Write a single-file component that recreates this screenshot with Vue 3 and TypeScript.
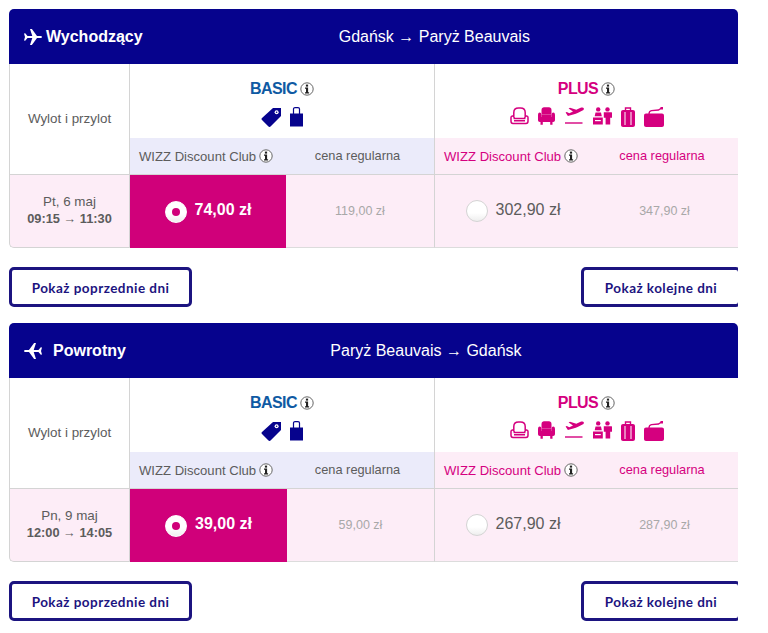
<template>
  <div class="page">
    <section v-for="f in flights" :key="f.title" class="flight">
      <header class="bar">
        <svg class="plane" :class="{ back: f.back }" viewBox="0 0 18 16">
          <path d="M0 4.500l1.200-.2 2.300 2.700h4.800L6 0h1.900l5.100 7h3.200c1 0 1.800.4 1.800 1s-.8 1-1.800 1H13l-5.100 7H6l2.300-7H3.500l-2.300 2.700L0 11.500l1-3.500z" />
        </svg>
        <h2 class="title">{{ f.title }}</h2>
        <div class="route">{{ f.route }}</div>
      </header>

      <div class="table">
        <div class="label-cell"><span>Wylot i przylot</span></div>

        <div class="plan basic">
          <div class="plan-head">
            <div class="plan-name">BASIC <svg class="info" viewBox="0 0 14 14"><circle cx="7" cy="7" r="6.2" fill="#fff" stroke="#666" /><rect x="5.9" y="2.6" width="2.2" height="2" fill="#222" /><path d="M5 5.6h3.1v4.6h1v1.2H5v-1.2h1V6.800H5z" fill="#222" /></svg></div>
            <div class="icons">
              <svg width="21" height="20" viewBox="0 0 21 20"><path d="M12 1h8v8L9.500 19.500a1.400 1.400 0 0 1-2 0L1 13a1.400 1.400 0 0 1 0-2z" /><circle cx="15.600" cy="5.200" r="2" fill="#fff" /><circle cx="15.600" cy="5.200" r=".8" /></svg>
              <svg width="13" height="20" viewBox="0 0 13 20"><path d="M0 6.500h13V19.500H0z" /><path d="M3.500 7V2C3.500 1 4.200.7 5 .7h3c.8 0 1.500.3 1.500 1.300v5" fill="none" stroke="#06038d" stroke-width="1.200" /></svg>
            </div>
          </div>
          <div class="sub">
            <div class="sub-club">WIZZ Discount Club <svg class="info" viewBox="0 0 14 14"><circle cx="7" cy="7" r="6.2" fill="#fff" stroke="#666" /><rect x="5.9" y="2.6" width="2.2" height="2" fill="#222" /><path d="M5 5.6h3.1v4.6h1v1.2H5v-1.2h1V6.800H5z" fill="#222" /></svg></div>
            <div class="sub-reg">cena regularna</div>
          </div>
        </div>

        <div class="plan plus">
          <div class="plan-head">
            <div class="plan-name">PLUS <svg class="info" viewBox="0 0 14 14"><circle cx="7" cy="7" r="6.2" fill="#fff" stroke="#666" /><rect x="5.9" y="2.6" width="2.2" height="2" fill="#222" /><path d="M5 5.6h3.1v4.6h1v1.2H5v-1.2h1V6.800H5z" fill="#222" /></svg></div>
            <div class="icons">
              <svg width="19" height="18" viewBox="0 0 19 18"><path d="M3.800 9V5.500C3.800 2.800 5.800 1 8.500 1h2c2.700 0 4.700 1.800 4.700 4.500V9" fill="none" stroke="#d5007f" stroke-width="1.500" /><path d="M1 10.500C1 8.700 3.500 8.300 4 10l.3 1.500h10.400L15 10c.5-1.700 3-1.300 3 .5v3.800c0 1.200-.9 2.200-2 2.200H3c-1.100 0-2-1-2-2.200zM4 13.800h11" fill="none" stroke="#d5007f" stroke-width="1.500" /></svg>
              <svg width="17" height="18" viewBox="0 0 17 18"><path d="M3.500 3C3.500 1.300 4.700.3 6 .3h5c1.300 0 2.500 1 2.500 2.700v4.500h-10z" /><path d="M0 8c0-1.700.8-2.500 1.700-2.500S3.400 6.300 3.400 8v2h10.200V8c0-1.700.8-2.500 1.700-2.500S17 6.300 17 8v5c0 1.100-.8 2-1.800 2H1.800C.8 15 0 14.100 0 13zM2.500 15h2.300v2.700H2.500zM12.200 15h2.300v2.700h-2.300z" /><path d="M3.400 7.500h10.200v3H3.400z" /></svg>
              <svg width="20" height="18" viewBox="0 0 20 18"><path d="M19.800 1.200c-.5-1-2-.9-3.200-.4l-4.300 1.900L6 .8 4.600 1.500l4.400 3.100-3.700 1.700-2.500-1.300-1.200.6 2.300 3.300c3.400-.4 7.500-1.900 10.200-3.100l4.900-2.500c.7-.4 1-1.400.8-2.100z" /><path d="M1 15.300h17.500v1.400H1z" /></svg>
              <svg width="19" height="18" viewBox="0 0 19 18"><circle cx="5.200" cy="2.400" r="2.200" /><circle cx="14.500" cy="2.400" r="2.200" /><path d="M2.500 5.500h5.500l.8 3.700H1.700zM0 10.400h9.800v7.100H0zM10.800 5.300h7.700c.3 0 .5.200.5.500v5h-1.800v6.700h-4.600v-6.700h-1.800z" /><path d="M2 13h5.800v1.200H2z" fill="#fff" /></svg>
              <svg width="14" height="21" viewBox="0 0 14 21"><path d="M4.500 3.500V1h5v2.500" fill="none" stroke="#d5007f" stroke-width="1.400" /><path d="M2 3h10c1.100 0 2 .9 2 2v13c0 1.100-.9 2-2 2H2c-1.100 0-2-.9-2-2V5c0-1.100.9-2 2-2z" /><path d="M3.500 5h1v13h-1zM9.500 5h1v13h-1z" fill="#fff" /></svg>
              <svg width="20" height="20" viewBox="0 0 20 20"><path d="M2 6.500h16c1.100 0 2 .9 2 2V18c0 1.100-.9 2-2 2H2c-1.100 0-2-.9-2-2V8.500c0-1.100.9-2 2-2z" /><path d="M5 7c0-2 1-3 2.500-3.300L14.500 3l3-2" fill="none" stroke="#d5007f" stroke-width="1.300" /><path d="M16.500 0h2.500v2.500h-2.500z" /></svg>
            </div>
          </div>
          <div class="sub">
            <div class="sub-club">WIZZ Discount Club <svg class="info" viewBox="0 0 14 14"><circle cx="7" cy="7" r="6.2" fill="#fff" stroke="#666" /><rect x="5.9" y="2.6" width="2.2" height="2" fill="#222" /><path d="M5 5.6h3.1v4.6h1v1.2H5v-1.2h1V6.800H5z" fill="#222" /></svg></div>
            <div class="sub-reg">cena regularna</div>
          </div>
        </div>

        <div class="date-cell">
          <div>{{ f.date }}</div>
          <div class="times">{{ f.times }}</div>
        </div>

        <div class="fares first">
          <div class="fare selected" :style="{ width: f.selectedWidth + 'px' }">
            <span class="radio on"></span>
            <span class="price">{{ f.basic }}</span>
          </div>
          <div class="regular">{{ f.basicRegular }}</div>
        </div>

        <div class="fares">
          <div class="fare">
            <span class="radio"></span>
            <span class="price">{{ f.plus }}</span>
          </div>
          <div class="regular">{{ f.plusRegular }}</div>
        </div>
      </div>

      <div class="actions">
        <button class="btn prev">Pokaż poprzednie dni</button>
        <button class="btn next">Pokaż kolejne dni</button>
      </div>
    </section>
  </div>
</template>

<script setup lang="ts">
interface Flight {
  title: string
  route: string
  back: boolean
  date: string
  times: string
  basic: string
  basicRegular: string
  plus: string
  plusRegular: string
  selectedWidth: number
}

const flights: Flight[] = [
  {
    title: 'Wychodzący',
    route: 'Gdańsk → Paryż Beauvais',
    back: false,
    date: 'Pt, 6 maj',
    times: '09:15 → 11:30',
    basic: '74,00 zł',
    basicRegular: '119,00 zł',
    plus: '302,90 zł',
    plusRegular: '347,90 zł',
    selectedWidth: 156
  },
  {
    title: 'Powrotny',
    route: 'Paryż Beauvais → Gdańsk',
    back: true,
    date: 'Pn, 9 maj',
    times: '12:00 → 14:05',
    basic: '39,00 zł',
    basicRegular: '59,00 zł',
    plus: '267,90 zł',
    plusRegular: '287,90 zł',
    selectedWidth: 157
  }
]
</script>

<style>
html,
body {
  margin: 0;
  background: #fff;
}
</style>

<style scoped>
.page {
  width: 729px;
  padding: 9px 0 0 9px;
  overflow: hidden;
  font-family: "Liberation Sans", Arial, sans-serif;
  color: #5c5c5c;
}
.flight {
  margin-bottom: 16px;
}
.bar {
  height: 55px;
  display: flex;
  align-items: center;
  padding: 0 12px 0 15px;
  background: #06038d;
  border-radius: 5px 5px 0 0;
  color: #fff;
}
.plane {
  width: 18px;
  height: 16px;
  margin-right: 4px;
  fill: #fff;
  flex: none;
}
.plane.back {
  transform: scaleX(-1);
  margin-right: 11px;
}
.title {
  margin: 0;
  font-size: 16px;
  font-weight: 700;
  white-space: nowrap;
}
.route {
  flex: 1;
  text-align: center;
  font-size: 16px;
}
.table {
  display: grid;
  grid-template-columns: 120px 305px 304px;
  grid-template-rows: 111px 73px;
}
.label-cell {
  display: flex;
  align-items: center;
  justify-content: center;
  padding-bottom: 2px;
  border-left: 1px solid #d4d4d4;
  border-bottom: 1px solid #d4d4d4;
  font-size: 13.400px;
}
.plan {
  display: flex;
  flex-direction: column;
  border-left: 1px solid #d4d4d4;
  border-bottom: 1px solid #d4d4d4;
}
.plan-head {
  height: 74px;
  padding-top: 15px;
  box-sizing: border-box;
  text-align: center;
}
.plan-name {
  height: 20px;
  display: flex;
  align-items: center;
  justify-content: center;
  gap: 3px;
  font-size: 16px;
  font-weight: 700;
  letter-spacing: -0.6px;
}
.basic .plan-name {
  color: #0f5aa3;
}
.plus .plan-name {
  color: #d5007f;
}
.icons {
  display: flex;
  align-items: flex-start;
  justify-content: center;
  gap: 8px;
  height: 20px;
  margin-top: 8px;
}
.basic .icons svg {
  fill: #06038d;
}
.plus .icons {
  gap: 9px;
}
.plus .icons svg {
  fill: #d5007f;
}
.info {
  width: 14px;
  height: 14px;
  flex: none;
}
.sub {
  flex: 1;
  display: flex;
  align-items: center;
  font-size: 13.100px;
}
.basic .sub {
  background: #ebebfa;
  color: #5c5c5c;
}
.plus .sub {
  background: #fdedf7;
  color: #d5007f;
}
.sub-club {
  width: 156px;
  box-sizing: border-box;
  padding-left: 9px;
  display: flex;
  align-items: center;
  gap: 3px;
  white-space: nowrap;
}
.sub-reg {
  flex: 1;
  text-align: center;
  margin-top: -1px;
  padding-right: 5px;
  font-size: 12.800px;
}
.date-cell {
  display: flex;
  flex-direction: column;
  align-items: center;
  justify-content: center;
  gap: 1px;
  padding-bottom: 1px;
  background: #fdedf7;
  border-left: 1px solid #d4d4d4;
  border-bottom: 1px solid #d4d4d4;
  border-radius: 0 0 0 5px;
  font-size: 13.400px;
  line-height: 16px;
}
.times {
  font-weight: 700;
  font-size: 12.800px;
}
.fares {
  display: flex;
  background: #fdedf7;
  border-left: 1px solid #d4d4d4;
  border-bottom: 1px solid #dcdcdc;
}
.fare {
  width: 156px;
  display: flex;
  align-items: center;
  justify-content: center;
  gap: 8px;
}
.first .fare {
  margin-bottom: -1px;
}
.fare.selected {
  background: #d0007a;
  color: #fff;
  font-weight: 700;
}
.radio {
  width: 20px;
  height: 20px;
  border: 1px solid #d4d4d4;
  border-radius: 50%;
  background: linear-gradient(#fff 60%, #eeeeee);
  display: flex;
  align-items: center;
  justify-content: center;
}
.radio.on {
  border-color: #fff;
}
.radio.on::after {
  content: "";
  width: 8px;
  height: 8px;
  border-radius: 50%;
  background: #d0007a;
}
.price {
  font-size: 16px;
  margin-top: -3px;
}
.regular {
  flex: 1;
  display: flex;
  align-items: center;
  justify-content: center;
  font-size: 12.500px;
  color: #a8a8a8;
}
.actions {
  display: flex;
  justify-content: space-between;
  margin-top: 19px;
}
.btn {
  height: 40px;
  padding: 1px 0 0;
  background: #fff;
  border: 3px solid #1c1480;
  border-radius: 5px;
  font-family: Lato, "Liberation Sans", sans-serif;
  font-size: 13.500px;
  font-weight: 700;
  letter-spacing: 0.45px;
  color: #1c1480;
  cursor: pointer;
}
.prev {
  width: 183px;
}
.next {
  width: 160px;
  margin-right: -3px;
}
</style>
